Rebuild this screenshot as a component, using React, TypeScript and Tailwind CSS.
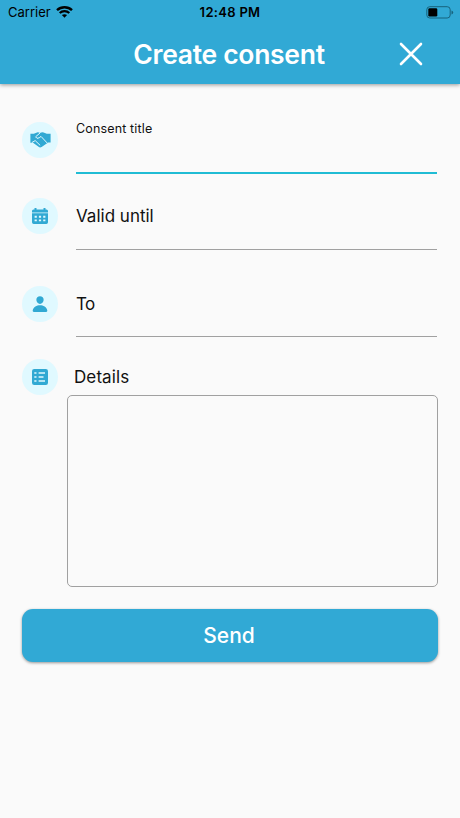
import type { ReactNode } from 'react';
import { IoPerson } from 'react-icons/io5';

function StatusBar() {
  return (
    <div className="grid h-6 grid-cols-3 items-center pl-2 pr-[6px] text-[13px] leading-none text-black">
      <div className="flex items-center gap-[5px]">
        <span>Carrier</span>
        <svg className="h-[12px] w-[17px]" viewBox="0 0 17 12" fill="none">
          <path d="M1 4.2C5.2 0.2 11.8 0.2 16 4.2" stroke="currentColor" strokeWidth="2.4" />
          <path d="M3.7 7C6.4 4.4 10.6 4.4 13.3 7" stroke="currentColor" strokeWidth="2.2" />
          <path d="M5.9 9.1C7.4 7.8 9.6 7.8 11.1 9.1L8.5 11.8Z" fill="currentColor" />
        </svg>
      </div>
      <span className="pr-[2px] text-center font-semibold tracking-[0.3px]">12:48 PM</span>
      <svg className="h-[13px] w-[28px] justify-self-end" viewBox="0 0 28 13" fill="none">
        <rect x="0.8" y="0.7" width="23.4" height="11.3" rx="3" stroke="#17637d" />
        <rect x="2.3" y="2.2" width="9" height="8.3" rx="1.3" fill="#000" />
        <path d="M25.5 4.4Q27.2 5 27.2 6.4T25.5 8.4Z" fill="#17637d" />
      </svg>
    </div>
  );
}

function HandshakeIcon() {
  return (
    <svg className="h-4 w-[21px]" viewBox="0 0 21 16" fill="none">
      <path
        d="M0.4 1.7H3.8L7 0.4Q8.5 0 10 1Q12 -0.2 13.6 0.5L16.8 1.7H20.6V10.5H18.2L11.6 15Q10 15.9 8.6 14.8L3 10.7H0.4Z"
        fill="currentColor"
      />
      <path
        d="M10 1L5.6 4.8Q6.6 7.4 9.2 5.8L11 4.4L17.2 11M1.8 10.6L5.2 8.6L10.2 13.4"
        stroke="#dff8fe"
        strokeWidth="1"
        strokeLinejoin="round"
      />
    </svg>
  );
}

function CalendarIcon() {
  return (
    <svg className="h-4 w-4" viewBox="0 0 16 16" fill="none">
      <path
        d="M2.5 0H4.5V1.5H11.5V0H13.5V1.5H14.5Q16 1.5 16 3V4.4H0V3Q0 1.5 1.5 1.5H2.5ZM0 5.3H16V14.3Q16 16 14.3 16H1.7Q0 16 0 14.3Z"
        fill="currentColor"
      />
      <path
        d="M2.6 8.7H4.8M6.9 8.7H9.1M11.2 8.7H13.4M2.6 12.4H4.8M6.9 12.4H9.1M11.2 12.4H13.4"
        stroke="#dff8fe"
        strokeWidth="1.9"
      />
    </svg>
  );
}

function ListIcon() {
  return (
    <svg className="h-4 w-4" viewBox="0 0 16 16" fill="none">
      <rect width="16" height="16" rx="2.2" fill="currentColor" />
      <path
        d="M2.3 4H4.5M2.3 8H4.5M2.3 12H4.5M6.6 4H13M6.6 8H11.5M6.6 12H13"
        stroke="#dff8fe"
        strokeWidth="1.4"
      />
    </svg>
  );
}

function IconCircle({ children }: { children: ReactNode }) {
  return (
    <div className="flex h-9 w-9 shrink-0 items-center justify-center rounded-full bg-[#e0f9ff] text-[#31a9d3]">
      {children}
    </div>
  );
}

export default function App() {
  return (
    <div className="h-[818px] w-[460px] overflow-hidden bg-[#fafafa] font-['Inter',sans-serif] text-[#111]">
      <header className="h-[84px] bg-[#31a9d5] shadow-[0_1px_4px_rgba(0,0,0,0.4)]">
        <StatusBar />
        <div className="grid h-[60px] grid-cols-[1fr_auto_1fr] items-center">
          <h1 className="col-start-2 mr-[2px] pt-[2px] text-[26.5px] font-semibold tracking-[-0.3px] text-white">
            Create consent
          </h1>
          <button className="mr-[37px] justify-self-end" aria-label="Close">
            <svg className="h-6 w-6" viewBox="0 0 24 24" fill="none">
              <path d="M2 2L22 22M22 2L2 22" stroke="white" strokeWidth="2.6" strokeLinecap="round" />
            </svg>
          </button>
        </div>
      </header>

      <main className="px-[22px]">
        <div className="flex pt-[38px]">
          <IconCircle>
            <HandshakeIcon />
          </IconCircle>
          <label className="ml-[18px] mr-px h-[52px] flex-1 border-b-2 border-[#20bcd4] text-[12.5px] leading-[14px] tracking-[0.15px]">
            Consent title
          </label>
        </div>
        <div className="mt-6 flex">
          <IconCircle>
            <CalendarIcon />
          </IconCircle>
          <label className="ml-[18px] mr-px h-[52px] flex-1 border-b border-[#a0a0a0] text-[17px] leading-[37px]">
            Valid until
          </label>
        </div>
        <div className="mt-9 flex">
          <IconCircle>
            <IoPerson size={18} />
          </IconCircle>
          <label className="ml-[18px] mr-px h-[51px] flex-1 border-b border-[#a0a0a0] text-[17px] leading-[37px] tracking-[-0.7px]">
            To
          </label>
        </div>
        <div className="mt-[22px] flex">
          <IconCircle>
            <ListIcon />
          </IconCircle>
          <label className="ml-4 text-[17px] leading-9 tracking-[0.1px]">Details</label>
        </div>
        <textarea className="ml-[45px] block h-[192px] w-[371px] resize-none rounded-[5px] border border-[#a0a0a0] outline-none" />
        <button className="mt-[22px] h-[53px] w-full rounded-[11px] bg-[#31a9d5] pr-[2px] text-[21px] font-medium text-white shadow-[0_1px_3px_rgba(0,0,0,0.4)]">
          Send
        </button>
      </main>
    </div>
  );
}
